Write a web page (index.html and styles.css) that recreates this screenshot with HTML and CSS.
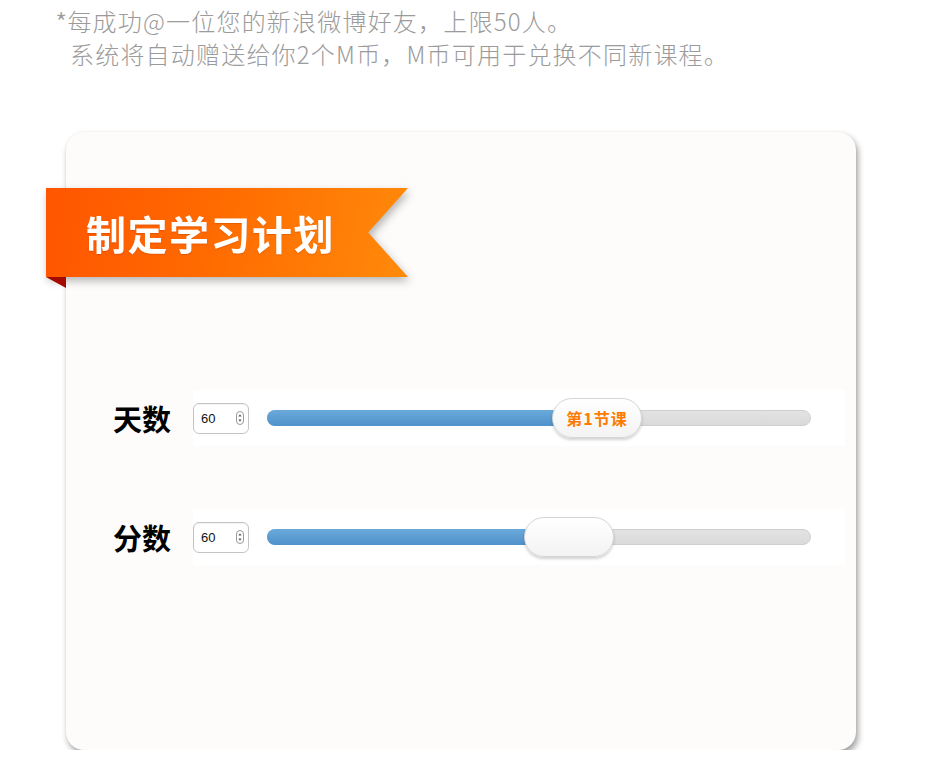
FILE: index.html
```html
<!DOCTYPE html>
<html lang="zh-CN">
<head>
<meta charset="utf-8">
<title>制定学习计划</title>
<link rel="stylesheet" href="styles.css">
</head>
<body>
<div class="notice">
  <div class="notice-line"><span class="star">*</span>每成功@一位您的新浪微博好友，上限50人。</div>
  <div class="notice-line indent">系统将自动赠送给你2个M币，M币可用于兑换不同新课程。</div>
</div>

<div class="card">
  <div class="ribbon-wrap">
    <div class="ribbon">制定学习计划</div>
  </div>
  <div class="ribbon-fold"></div>

  <div class="rows">
    <div class="row">
      <div class="label">天数</div>
      <div class="band">
        <div class="spinner">
          <span class="spin-val">60</span>
          <svg class="spin-arrows" width="8" height="14" viewBox="0 0 8 14">
            <rect x="0.5" y="0.5" width="7" height="13" rx="3.5" fill="#fff" stroke="#9a9a9a"/>
            <path d="M4 3.2 L5.6 5.4 L2.4 5.4 Z" fill="#555"/>
            <path d="M4 10.8 L5.6 8.6 L2.4 8.6 Z" fill="#555"/>
          </svg>
        </div>
        <div class="track">
          <div class="fill" style="width:293px"></div>
          <div class="thumb thumb-text" style="left:284px">第1节课</div>
        </div>
      </div>
    </div>

    <div class="row">
      <div class="label">分数</div>
      <div class="band">
        <div class="spinner">
          <span class="spin-val">60</span>
          <svg class="spin-arrows" width="8" height="14" viewBox="0 0 8 14">
            <rect x="0.5" y="0.5" width="7" height="13" rx="3.5" fill="#fff" stroke="#9a9a9a"/>
            <path d="M4 3.2 L5.6 5.4 L2.4 5.4 Z" fill="#555"/>
            <path d="M4 10.8 L5.6 8.6 L2.4 8.6 Z" fill="#555"/>
          </svg>
        </div>
        <div class="track">
          <div class="fill" style="width:265px"></div>
          <div class="thumb" style="left:256px"></div>
        </div>
      </div>
    </div>
  </div>
</div>
</body>
</html>
```

FILE: styles.css
```css
html, body {
  margin: 0;
  padding: 0;
  background: #ffffff;
}

body {
  font-family: "Noto Sans CJK SC", "Noto Sans", sans-serif;
  padding-top: 4px;
}

.notice {
  padding-left: 55px;
  color: #9b9b9b;
  font-size: 24px;
  line-height: 33px;
  font-weight: 300;
  letter-spacing: 1.2px;
}

.notice-line {
  height: 33px;
}

.star {
  font-size: 28px;
  line-height: 0;
  letter-spacing: 0;
  vertical-align: -3px;
}

.notice-line.indent {
  padding-left: 15px;
}

.card {
  margin: 62px 0 0 66px;
  width: 790px;
  height: 618px;
  background: #fdfcfa;
  border-radius: 18px;
  box-shadow: 2px 4px 6px rgba(0, 0, 0, 0.38), 0 0 2px rgba(0, 0, 0, 0.06);
  padding-top: 56px;
  box-sizing: border-box;
}

.ribbon-wrap {
  margin-left: -20px;
  width: 362px;
  filter: drop-shadow(2px 4px 4px rgba(0, 0, 0, 0.28));
}

.ribbon {
  height: 89px;
  box-sizing: border-box;
  padding-left: 40px;
  display: flex;
  align-items: center;
  color: #ffffff;
  font-size: 40px;
  font-weight: 700;
  letter-spacing: 1.5px;
  background: linear-gradient(100deg, #ff5500 0%, #ff6a00 45%, #ff8a0a 100%);
  clip-path: polygon(0 0, 100% 0, 89% 50%, 100% 100%, 0 100%);
  text-shadow: 0 1px 1px rgba(150, 40, 0, 0.25);
}

.ribbon-fold {
  margin-left: -20px;
  width: 20px;
  height: 11px;
  background: #a50a00;
  clip-path: polygon(0 0, 100% 0, 100% 100%);
}

.rows {
  display: flex;
  flex-direction: column;
  gap: 63px;
  margin-top: 102px;
}

.row {
  display: flex;
  align-items: center;
  height: 56px;
}

.label {
  width: 80px;
  padding-left: 47px;
  font-size: 29px;
  font-weight: 700;
  color: #000000;
  line-height: 1;
}

.band {
  flex: 1;
  height: 56px;
  margin-right: 11px;
  background: #ffffff;
  display: flex;
  align-items: center;
  gap: 18px;
}

.spinner {
  width: 56px;
  height: 31px;
  box-sizing: border-box;
  border: 1px solid #c4c4c4;
  border-radius: 6px;
  background: #fff;
  display: flex;
  align-items: center;
  justify-content: space-between;
  padding: 0 4px 0 7px;
  box-shadow: inset 0 1px 1px rgba(0, 0, 0, 0.05);
}

.spin-val {
  font-family: "Liberation Sans", Arial, sans-serif;
  font-size: 13px;
  color: #111;
}

.track {
  position: relative;
  width: 544px;
  height: 16px;
  box-sizing: border-box;
  border: 1px solid #cfcfcf;
  border-radius: 8px;
  background: linear-gradient(#e3e3e3, #dadada);
}

.fill {
  height: 16px;
  margin: -1px 0 0 -1px;
  border-radius: 8px 0 0 8px;
  background: linear-gradient(180deg, #6aa9da 0%, #4f91ca 100%);
}

.thumb {
  position: absolute;
  top: -13px;
  width: 90px;
  height: 40px;
  box-sizing: border-box;
  border: 1px solid #d6d6d6;
  border-radius: 20px;
  background: linear-gradient(180deg, #ffffff 0%, #f3f3f3 100%);
  box-shadow: 0 2px 3px rgba(0, 0, 0, 0.18);
}

.thumb-text {
  display: flex;
  align-items: center;
  justify-content: center;
  color: #ff7a00;
  font-size: 16px;
  font-weight: 700;
  letter-spacing: 1px;
}
```
